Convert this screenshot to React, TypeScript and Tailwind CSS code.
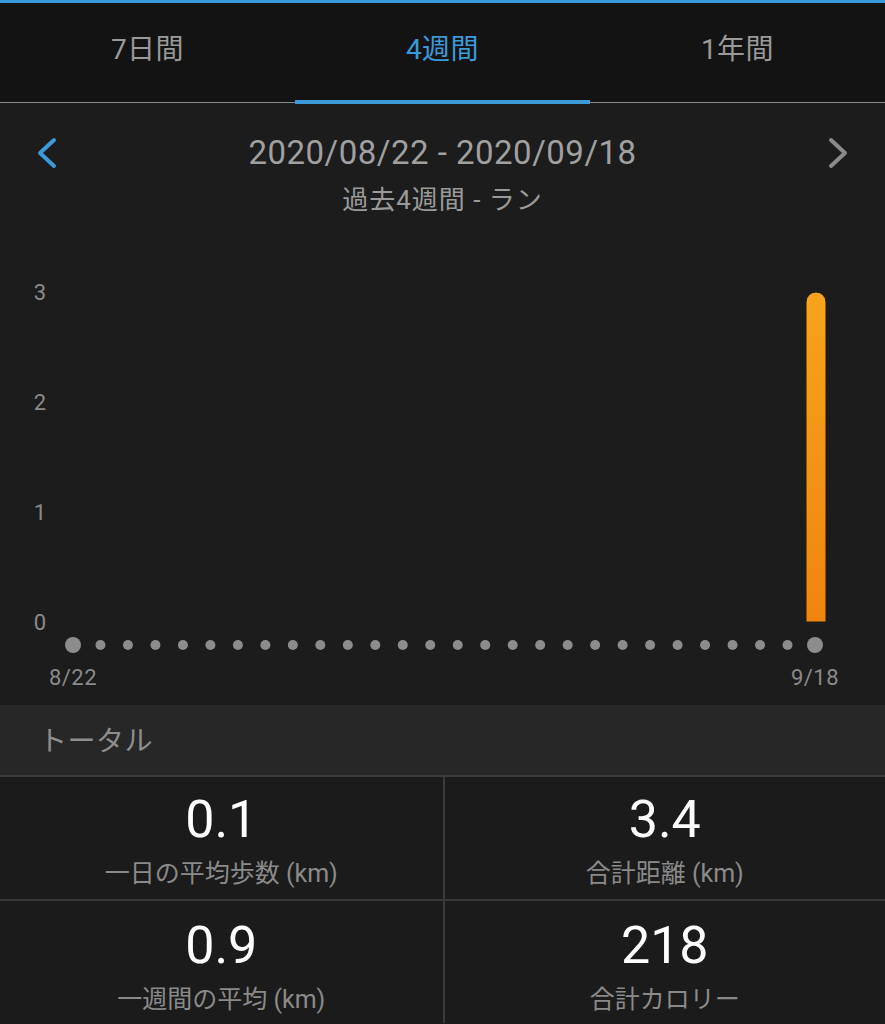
import React from "react";

const LATIN = "font-['Roboto','Noto_Sans_CJK_JP',sans-serif]";

function Tab({ label, active }: { label: string; active?: boolean }) {
  return (
    <div className="relative flex justify-center pt-[33px]">
      <span
        className={`text-[28px] leading-none tracking-[0.5px] ${active ? "text-[#3d9ad8]" : "text-[#999999]"}`}
      >
        {label}
      </span>
      {active && (
        <div className="absolute left-0 right-0 bottom-[-2px] h-[4px] bg-[#3d9ad8] z-10" />
      )}
    </div>
  );
}

function Chart() {
  const bigR = 8;
  const smallR = 5;
  const x0 = 73;
  const x1 = 815;
  const n = 28;
  const step = (x1 - x0) / (n - 1);
  const dots = Array.from({ length: n }, (_, i) => x0 + i * step);
  const yLabels = [
    { v: "3", y: 69 },
    { v: "2", y: 179 },
    { v: "1", y: 289 },
    { v: "0", y: 399 },
  ];
  return (
    <svg width={885} height={482} className="block" style={{ fontFamily: "Roboto, 'Noto Sans CJK JP', sans-serif" }}>
      <defs>
        <linearGradient id="barg" x1="0" y1="0" x2="0" y2="1">
          <stop offset="0" stopColor="#f7a31c" />
          <stop offset="1" stopColor="#ef8510" />
        </linearGradient>
      </defs>
      {yLabels.map((l) => (
        <text key={l.v} x={40} y={l.y} textAnchor="middle" dominantBaseline="central" fontSize={22} fill="#8a8a8a">
          {l.v}
        </text>
      ))}
      <path
        d="M806 399 L806 79 A10 10 0 0 1 826 79 L826 399 Z"
        fill="url(#barg)"
        stroke="#2a1a08"
        strokeWidth={1}
      />
      {dots.map((x, i) => (
        <circle
          key={i}
          cx={x}
          cy={422}
          r={i === 0 || i === n - 1 ? bigR : smallR}
          fill="#8c8c8c"
        />
      ))}
      <text x={73} y={454} textAnchor="middle" dominantBaseline="central" fontSize={22} fill="#8a8a8a" letterSpacing={0.5}>
        8/22
      </text>
      <text x={815} y={454} textAnchor="middle" dominantBaseline="central" fontSize={22} fill="#8a8a8a" letterSpacing={0.5}>
        9/18
      </text>
    </svg>
  );
}

function Stat({ value, label, right, top }: { value: string; label: string; right?: boolean; top: string }) {
  return (
    <div
      className={`flex flex-col items-center h-[122px] ${top} bg-[#1b1b1b] ${right ? "border-l-2 border-[#3a3a3a]" : ""}`}
    >
      <span className="text-[52px] leading-none text-white">{value}</span>
      <span className="mt-[15px] text-[25px] leading-none text-[#8a8a8a]">{label}</span>
    </div>
  );
}

export default function App() {
  return (
    <div className={`w-[885px] h-[1024px] overflow-hidden bg-[#1c1c1c] ${LATIN}`}>
      <div className="h-[3px] bg-[#3a9ad9]" />
      <div className="grid grid-cols-3 h-[99px] bg-[#131313]">
        <Tab label="7日間" />
        <Tab label="4週間" active />
        <Tab label="1年間" />
      </div>
      <div className="h-px bg-[#8a8a8a]" />
      <div className="h-[120px] flex flex-col items-center relative">
        <div className="flex w-full items-center justify-between px-[36px] pt-[33px]">
          <svg width={22} height={32} viewBox="0 0 22 32">
            <polyline points="18,3 4,16 18,29" fill="none" stroke="#3d9ad8" strokeWidth={4} strokeLinecap="round" strokeLinejoin="round" />
          </svg>
          <span className="text-[33px] leading-none text-[#a0a0a0] tracking-[0.5px]">
            2020/08/22 - 2020/09/18
          </span>
          <svg width={22} height={32} viewBox="0 0 22 32">
            <polyline points="4,3 18,16 4,29" fill="none" stroke="#8a8a8a" strokeWidth={4} strokeLinecap="round" strokeLinejoin="round" />
          </svg>
        </div>
        <span className="mt-[18px] text-[26px] leading-none tracking-[1px] text-[#9a9a9a]">過去4週間 - ラン</span>
      </div>
      <Chart />
      <div className="h-[70px] bg-[#272727] flex items-center px-[39px] pt-[4px]">
        <span className="text-[28px] leading-none tracking-[0.5px] text-[#8e8e8e]">トータル</span>
      </div>
      <div className="h-[2px] bg-[#3c3c3c]" />
      <div className="grid grid-cols-2">
        <Stat value="0.1" label="一日の平均歩数 (km)" top="pt-[17px]" />
        <Stat value="3.4" label="合計距離 (km)" right top="pt-[17px]" />
      </div>
      <div className="h-[2px] bg-[#383838]" />
      <div className="grid grid-cols-2">
        <Stat value="0.9" label="一週間の平均 (km)" top="pt-[19px]" />
        <Stat value="218" label="合計カロリー" right top="pt-[19px]" />
      </div>
    </div>
  );
}
